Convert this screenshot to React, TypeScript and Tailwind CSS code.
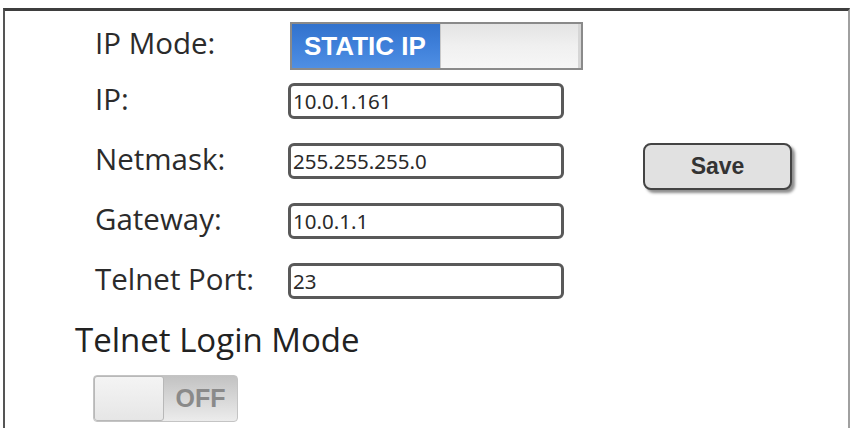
import React from "react";

const labelFont = { fontFamily: '"Open Sans", "DejaVu Sans", sans-serif' };

function Field({ label, value, extra }: { label: string; value: string; extra?: React.ReactNode }) {
  return (
    <div className="flex h-[36px] items-center">
      <div className="w-[193px] pb-[5px] text-[29.5px] leading-none text-[#2b2b2b]" style={labelFont}>
        {label}
      </div>
      <div
        className="flex h-[36px] w-[276px] items-center rounded-[6px] border-[3px] border-[#595959] bg-white pl-[2px] text-[20.5px] text-[#2a2a2a]"
        style={{ fontFamily: '"Noto Sans", "Open Sans", sans-serif' }}
      >
        {value}
      </div>
      {extra}
    </div>
  );
}

export default function App() {
  return (
    <div className="h-[428px] w-[851px] overflow-hidden bg-white pl-[3px] pr-[1px] pt-[8px]">
      <div className="h-[440px] border-l-[2px] border-r-[2px] border-t-[3px] border-l-[#555] border-r-[#a0a0a0] border-t-[#3e3e3e]">
        <div className="flex flex-col pl-[90px] pt-[11px]">
          <div className="flex h-[48px] items-center">
            <div className="w-[195px] pb-[6px] text-[29.5px] leading-none text-[#2b2b2b]" style={labelFont}>
              IP Mode:
            </div>
            <div className="flex h-[48px] w-[293px] border-[2px] border-[#8a8a8a] bg-[#e6e6e6]">
              <div
                className="flex w-[148px] items-center bg-gradient-to-b from-[#3272cc] via-[#3f80da] to-[#4f8fe3] pl-[12px] text-[26px] font-bold text-white"
                style={{ fontFamily: '"Liberation Sans", Arial, sans-serif' }}
              >
                STATIC IP
              </div>
              <div className="flex-1 border-l border-[#c8c8c8] bg-gradient-to-b from-[#e4e4e4] via-[#f0f0f0] to-[#f6f6f6] shadow-[inset_-3px_0_0_#d6d6d6]" />
            </div>
          </div>
          <div className="mt-[13px] flex flex-col gap-[24px]">
            <Field label="IP:" value="10.0.1.161" />
            <Field
              label="Netmask:"
              value="255.255.255.0"
              extra={
                <div
                  className="ml-[79px] flex h-[47px] w-[149px] self-start items-center justify-center rounded-[8px] border-[2px] border-[#444] bg-[#e1e1e1] text-[23px] font-bold text-[#333] shadow-[3px_3px_3px_rgba(0,0,0,0.45)]"
                  style={{ fontFamily: '"Liberation Sans", Arial, sans-serif' }}
                >
                  Save
                </div>
              }
            />
            <Field label="Gateway:" value="10.0.1.1" />
            <Field label="Telnet Port:" value="23" />
          </div>
        </div>
        <div className="pl-[70px] pt-[24px] text-[33px] leading-none text-[#222]" style={labelFont}>
          Telnet Login Mode
        </div>
        <div className="ml-[88px] mt-[19px] flex h-[47px] w-[145px] overflow-hidden rounded-[4px] border border-[#c4c4c4] bg-gradient-to-b from-[#c2c2c2] to-[#ececec]">
          <div className="w-[70px] rounded-[3px] border border-[#b8b8b8] bg-gradient-to-b from-[#f4f4f4] to-[#e6e6e6]" />
          <div
            className="flex flex-1 items-center justify-center text-[25px] font-bold text-[#8a8a8a]"
            style={{ fontFamily: '"Liberation Sans", Arial, sans-serif' }}
          >
            OFF
          </div>
        </div>
      </div>
    </div>
  );
}
